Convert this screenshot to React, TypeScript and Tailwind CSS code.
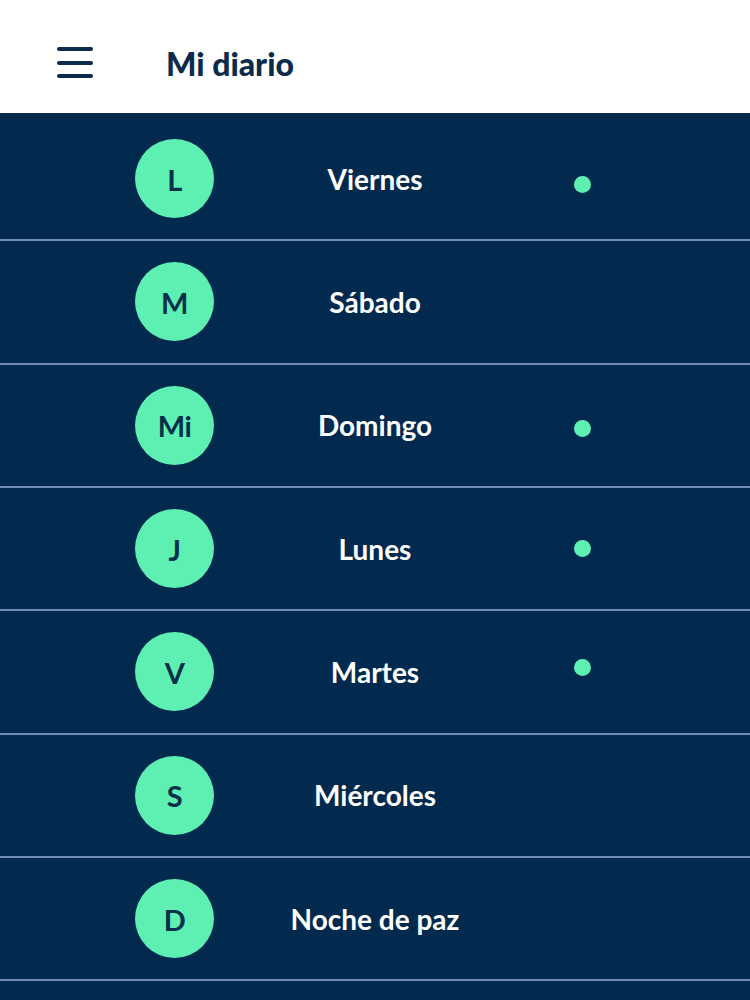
import React from "react";

type Row = { letter: string; name: string; dot: string | null };

const rows: Row[] = [
  { letter: "L", name: "Viernes", dot: "mt-[11px]" },
  { letter: "M", name: "Sábado", dot: null },
  { letter: "Mi", name: "Domingo", dot: "mt-[7px]" },
  { letter: "J", name: "Lunes", dot: "mt-[0px]" },
  { letter: "V", name: "Martes", dot: "-mt-[8px]" },
  { letter: "S", name: "Miércoles", dot: null },
  { letter: "D", name: "Noche de paz", dot: null },
];

export default function App() {
  return (
    <div
      className="w-[750px] h-[1000px] overflow-hidden bg-[#022a4f] flex flex-col"
      style={{ fontFamily: "Lato, 'Open Sans', sans-serif" }}
    >
      <header className="h-[113px] bg-white flex items-center shrink-0">
        <div className="ml-[57px] mt-[12px] w-[36px] flex flex-col gap-[9.5px]">
          <span className="block h-[4px] rounded-full bg-[#0b2b4c]" />
          <span className="block h-[4px] rounded-full bg-[#0b2b4c]" />
          <span className="block h-[4px] rounded-full bg-[#0b2b4c]" />
        </div>
        <h1 className="ml-[73px] mt-[14px] text-[32px] font-black text-[#0b2b4c] leading-none">
          Mi diario
        </h1>
      </header>
      <div className="pt-[5px] flex flex-col">
        {rows.map((r) => (
          <div
            key={r.name}
            className="h-[123.33px] shrink-0 border-b-2 border-[#6f8db0] grid grid-cols-[214px_1fr_214px] items-center"
          >
            <div className="pl-[135px] flex items-center">
              <div className="w-[79px] h-[79px] rounded-full bg-[#5eefb2] flex items-center justify-center text-[29px] font-bold text-[#08304b] leading-none tracking-[-0.5px] pt-[1px]">
                {r.letter}
              </div>
            </div>
            <div className="text-center text-white text-[28px] font-bold leading-none">
              {r.name}
            </div>
            <div className="flex items-center">
              {r.dot && (
                <span className={`block ml-[38px] w-[17px] h-[17px] rounded-full bg-[#5eefb2] ${r.dot}`} />
              )}
            </div>
          </div>
        ))}
      </div>
    </div>
  );
}
